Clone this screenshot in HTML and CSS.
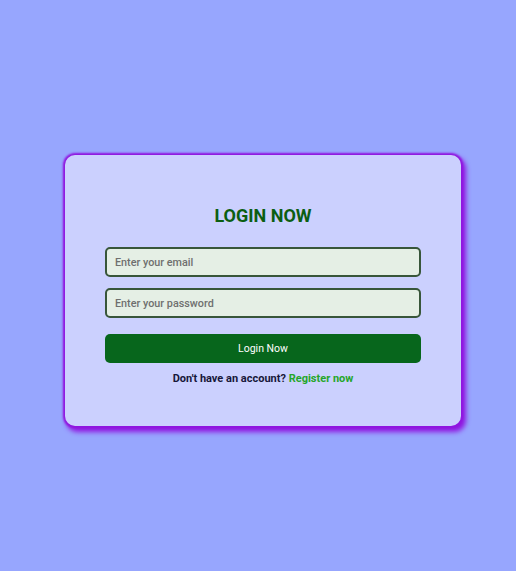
FILE: index.html
```
<!DOCTYPE html>
<html>
<head>
<meta charset="utf-8">
<link rel="stylesheet" href="styles.css">
</head>
<body>
<div class="page">
  <form class="card">
    <h2 class="title">LOGIN NOW</h2>
    <input class="field" type="email" placeholder="Enter your email">
    <input class="field" type="password" placeholder="Enter your password">
    <button class="btn" type="button">Login Now</button>
    <p class="note">Don't have an account? <a class="link" href="#">Register now</a></p>
  </form>
</div>
</body>
</html>
```
FILE: styles.css
```
html, body {
  margin: 0;
  padding: 0;
  background: #97a6fe;
  font-family: Roboto, "Noto Sans", sans-serif;
}
.page {
  min-height: 571px;
  box-sizing: border-box;
  padding: 155px 0 0 10px;
  display: flex;
  justify-content: center;
  align-items: flex-start;
}
.card {
  width: 396px;
  box-sizing: border-box;
  padding: 50px 40px 40px;
  background: #cbd0fe;
  border-radius: 10px;
  box-shadow: 0 0 2px 2px #9016e0, 3px 4px 5px 2px #9016e0;
  display: flex;
  flex-direction: column;
}
.title {
  margin: 0 0 20px;
  text-align: center;
  font-size: 18px;
  line-height: 22px;
  font-weight: 700;
  color: #0b5e12;
}
.field {
  height: 30px;
  box-sizing: border-box;
  border: 2px solid #38563a;
  border-radius: 5px;
  background: #e5efe5;
  padding: 0 8px;
  font-family: inherit;
  font-size: 10.8px;
  font-weight: 500;
  color: #333;
  margin: 0 0 11px;
  outline: none;
}
.field::placeholder {
  color: #6f6f6f;
}
.field + .field {
  margin-bottom: 16px;
}
.btn {
  height: 29px;
  border: none;
  border-radius: 5px;
  background: #07661c;
  color: #fff;
  font-family: inherit;
  font-size: 10.5px;
  font-weight: 400;
  margin: 0 0 9px;
}
.note {
  margin: 0;
  text-align: center;
  font-size: 11px;
  line-height: 14px;
  font-weight: 700;
  color: #17173a;
}
.link {
  color: #25a62a;
  text-decoration: none;
}
```
